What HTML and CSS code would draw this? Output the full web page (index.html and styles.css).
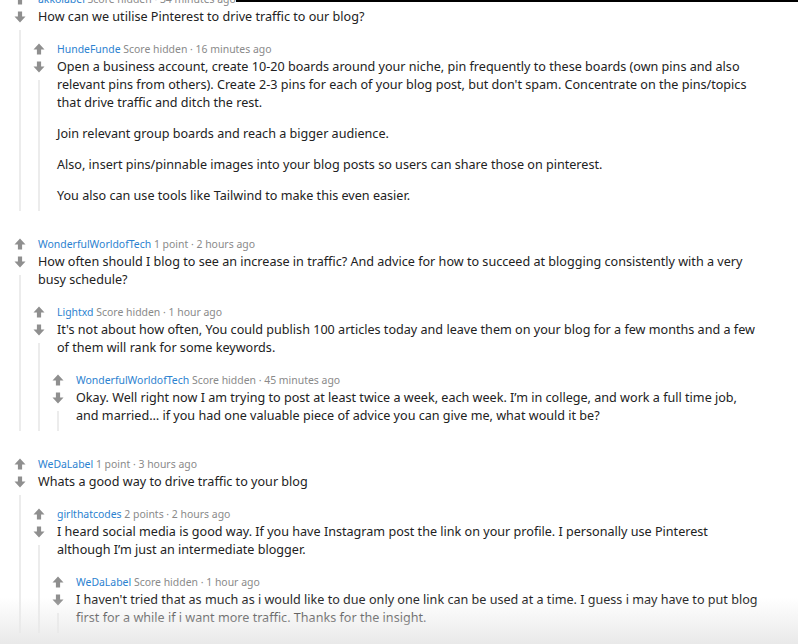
FILE: index.html
```html
<!DOCTYPE html>
<html>
<head>
<meta charset="utf-8">
<link rel="stylesheet" href="styles.css">
</head>
<body>
<div class="topbar"></div>
<div class="thread">

  <div class="comment top">
    <div class="rail">
      <svg class="arrow" viewBox="0 0 12 12"><path d="M6 0.5L11.5 6.5H8.1V11.5H3.9V6.5H0.5Z"/></svg>
      <svg class="arrow" viewBox="0 0 12 12"><path d="M6 11.5L11.5 5.5H8.1V0.5H3.9V5.5H0.5Z"/></svg>
      <div class="line"></div>
    </div>
    <div class="main">
      <div class="meta"><span class="user">akkolabel</span> Score hidden · 34 minutes ago</div>
      <div class="body"><p>How can we utilise Pinterest to drive traffic to our blog?</p></div>
      <div class="children">
        <div class="comment">
          <div class="rail">
            <svg class="arrow" viewBox="0 0 12 12"><path d="M6 0.5L11.5 6.5H8.1V11.5H3.9V6.5H0.5Z"/></svg>
            <svg class="arrow" viewBox="0 0 12 12"><path d="M6 11.5L11.5 5.5H8.1V0.5H3.9V5.5H0.5Z"/></svg>
            <div class="line"></div>
          </div>
          <div class="main">
            <div class="meta"><span class="user">HundeFunde</span> Score hidden · 16 minutes ago</div>
            <div class="body">
              <p>Open a business account, create 10-20 boards around your niche, pin frequently to these boards (own pins and also relevant pins from others). Create 2-3 pins for each of your blog post, but don't spam. Concentrate on the pins/topics that drive traffic and ditch the rest.</p>
              <p>Join relevant group boards and reach a bigger audience.</p>
              <p>Also, insert pins/pinnable images into your blog posts so users can share those on pinterest.</p>
              <p>You also can use tools like Tailwind to make this even easier.</p>
            </div>
          </div>
        </div>
      </div>
    </div>
  </div>

  <div class="comment top">
    <div class="rail">
      <svg class="arrow" viewBox="0 0 12 12"><path d="M6 0.5L11.5 6.5H8.1V11.5H3.9V6.5H0.5Z"/></svg>
      <svg class="arrow" viewBox="0 0 12 12"><path d="M6 11.5L11.5 5.5H8.1V0.5H3.9V5.5H0.5Z"/></svg>
      <div class="line"></div>
    </div>
    <div class="main">
      <div class="meta"><span class="user">WonderfulWorldofTech</span> 1 point · 2 hours ago</div>
      <div class="body"><p>How often should I blog to see an increase in traffic? And advice for how to succeed at blogging consistently with a very busy schedule?</p></div>
      <div class="children">
        <div class="comment">
          <div class="rail">
            <svg class="arrow" viewBox="0 0 12 12"><path d="M6 0.5L11.5 6.5H8.1V11.5H3.9V6.5H0.5Z"/></svg>
            <svg class="arrow" viewBox="0 0 12 12"><path d="M6 11.5L11.5 5.5H8.1V0.5H3.9V5.5H0.5Z"/></svg>
            <div class="line"></div>
          </div>
          <div class="main">
            <div class="meta"><span class="user">Lightxd</span> Score hidden · 1 hour ago</div>
            <div class="body"><p>It's not about how often, You could publish 100 articles today and leave them on your blog for a few months and a few of them will rank for some keywords.</p></div>
            <div class="children">
              <div class="comment">
                <div class="rail">
                  <svg class="arrow" viewBox="0 0 12 12"><path d="M6 0.5L11.5 6.5H8.1V11.5H3.9V6.5H0.5Z"/></svg>
                  <svg class="arrow" viewBox="0 0 12 12"><path d="M6 11.5L11.5 5.5H8.1V0.5H3.9V5.5H0.5Z"/></svg>
                  <div class="line"></div>
                </div>
                <div class="main">
                  <div class="meta"><span class="user">WonderfulWorldofTech</span> Score hidden · 45 minutes ago</div>
                  <div class="body"><p>Okay. Well right now I am trying to post at least twice a week, each week. I’m in college, and work a full time job, and married… if you had one valuable piece of advice you can give me, what would it be?</p></div>
                </div>
              </div>
            </div>
          </div>
        </div>
      </div>
    </div>
  </div>

  <div class="comment top">
    <div class="rail">
      <svg class="arrow" viewBox="0 0 12 12"><path d="M6 0.5L11.5 6.5H8.1V11.5H3.9V6.5H0.5Z"/></svg>
      <svg class="arrow" viewBox="0 0 12 12"><path d="M6 11.5L11.5 5.5H8.1V0.5H3.9V5.5H0.5Z"/></svg>
      <div class="line"></div>
    </div>
    <div class="main">
      <div class="meta"><span class="user">WeDaLabel</span> 1 point · 3 hours ago</div>
      <div class="body"><p>Whats a good way to drive traffic to your blog</p></div>
      <div class="children">
        <div class="comment">
          <div class="rail">
            <svg class="arrow" viewBox="0 0 12 12"><path d="M6 0.5L11.5 6.5H8.1V11.5H3.9V6.5H0.5Z"/></svg>
            <svg class="arrow" viewBox="0 0 12 12"><path d="M6 11.5L11.5 5.5H8.1V0.5H3.9V5.5H0.5Z"/></svg>
            <div class="line"></div>
          </div>
          <div class="main">
            <div class="meta"><span class="user">girlthatcodes</span> 2 points · 2 hours ago</div>
            <div class="body"><p>I heard social media is good way. If you have Instagram post the link on your profile. I personally use Pinterest although I’m just an intermediate blogger.</p></div>
            <div class="children">
              <div class="comment">
                <div class="rail">
                  <svg class="arrow" viewBox="0 0 12 12"><path d="M6 0.5L11.5 6.5H8.1V11.5H3.9V6.5H0.5Z"/></svg>
                  <svg class="arrow" viewBox="0 0 12 12"><path d="M6 11.5L11.5 5.5H8.1V0.5H3.9V5.5H0.5Z"/></svg>
                  <div class="line"></div>
                </div>
                <div class="main">
                  <div class="meta"><span class="user">WeDaLabel</span> Score hidden · 1 hour ago</div>
                  <div class="body"><p>I haven't tried that as much as i would like to due only one link can be used at a time. I guess i may have to put blog first for a while if i want more traffic. Thanks for the insight.</p></div>
                </div>
              </div>
            </div>
          </div>
        </div>
      </div>
    </div>
  </div>

</div>
<div class="fade"></div>
</body>
</html>
```
FILE: styles.css
```css
html, body {
  margin: 0;
  padding: 0;
  background: #ffffff;
  overflow: hidden;
}
body {
  font-family: "Noto Sans", "Open Sans", sans-serif;
  color: #222222;
  width: 798px;
  height: 644px;
  position: relative;
}
.topbar {
  position: absolute;
  top: 0;
  left: 236px;
  right: 0;
  height: 2px;
  background: #000;
  z-index: 3;
}
.thread {
  margin-top: -10px;
  padding-right: 22px;
}
.comment {
  display: flex;
}
.comment.top {
  padding-bottom: 12px;
  margin-bottom: 12px;
}
.children .comment {
  margin-left: -19px;
}
.rail {
  width: 38px;
  flex: none;
  display: flex;
  flex-direction: column;
  align-items: center;
  padding-left: 2px;
  box-sizing: border-box;
}
.arrow {
  width: 12px;
  height: 12px;
  margin: 3px 0;
  fill: #8f8f8f;
  flex: none;
}
.line {
  flex: 1;
  width: 2px;
  margin-top: 4px;
  background: #ececec;
}
.main {
  flex: 1;
  min-width: 0;
  padding-right: 8px;
}
.children .children .main {
  padding-right: 0;
}
.meta {
  font-size: 10.45px;
  line-height: 18px;
  height: 18px;
  color: #8a8a8a;
  white-space: nowrap;
}
.user {
  color: #2c82d0;
}
.body {
  font-size: 12.6px;
  line-height: 18px;
  padding-bottom: 6px;
}
.body p {
  margin: 0 0 13px 0;
}
.body p:last-child {
  margin-bottom: 0;
}
.children {
  margin-top: 8px;
}
.fade {
  position: absolute;
  left: 0;
  right: 0;
  bottom: 0;
  height: 46px;
  background: linear-gradient(to bottom, rgba(234,234,234,0), #e9e9e9);
  z-index: 2;
}
```
